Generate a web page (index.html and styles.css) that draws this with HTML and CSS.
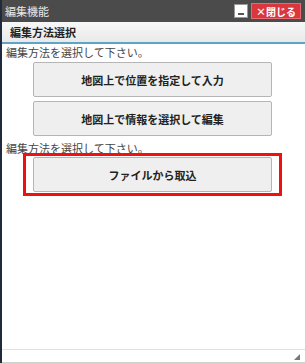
FILE: index.html
```
<!DOCTYPE html>
<html lang="ja">
<head>
    <meta charset="UTF-8">
    <meta name="viewport" content="width=device-width, initial-scale=1.0">
    <title>編集機能</title>
    <link rel="stylesheet" href="styles.css">
</head>
<body>
    <div class="window">
        <div class="titlebar">
            <span class="title">編集機能</span>
            <div class="title-buttons">
                <span class="btn-min"></span>
                <span class="btn-close">×閉じる</span>
            </div>
        </div>
        <div class="subheader">編集方法選択</div>
        <div class="content">
            <p class="note">編集方法を選択して下さい。</p>
            <div class="actions">
                <button class="action">地図上で位置を指定して入力</button>
                <button class="action">地図上で情報を選択して編集</button>
            </div>
            <p class="note">編集方法を選択して下さい。</p>
            <div class="actions">
                <div class="highlight">
                    <button class="action">ファイルから取込</button>
                </div>
            </div>
        </div>
        <div class="footer">
            <span class="grip"></span>
        </div>
    </div>
</body>
</html>
```

FILE: styles.css
```
body {
    margin: 0;
    font-family: "Noto Sans CJK JP", "Noto Sans", sans-serif;
    background: #fff;
}
.window {
    height: 363px;
    box-sizing: border-box;
    border-left: 2px solid #1f2a3a;
    display: flex;
    flex-direction: column;
}
.titlebar {
    height: 22px;
    background: #4b4b4b;
    display: flex;
    align-items: center;
    justify-content: space-between;
    padding: 0 4px 0 3px;
}
.title {
    color: #e8e8e8;
    font-size: 11px;
}
.title-buttons {
    display: flex;
    align-items: center;
    gap: 3px;
}
.btn-min {
    width: 14px;
    height: 14px;
    background: #fff;
    border: 1px solid #999;
    box-sizing: border-box;
    position: relative;
}
.btn-min::after {
    content: "";
    position: absolute;
    left: 3px;
    right: 3px;
    bottom: 2px;
    height: 2px;
    background: #555;
}
.btn-close {
    background: #d9363e;
    color: #fff;
    font-size: 10px;
    font-weight: bold;
    height: 16px;
    line-height: 15px;
    padding: 0 4px;
    border: 1px solid #e86a6f;
    box-sizing: border-box;
}
.subheader {
    height: 20px;
    line-height: 20px;
    background: linear-gradient(#f7f7f7, #e9e9e9);
    border-bottom: 2px solid #5ea4c9;
    font-size: 11px;
    font-weight: bold;
    color: #222;
    padding-left: 8px;
}
.content {
    flex: 1;
    padding-top: 1px;
}
.note {
    margin: 0;
    font-size: 11px;
    line-height: 14px;
    color: #444;
    padding-left: 4px;
}
.actions {
    display: flex;
    flex-direction: column;
    align-items: center;
    gap: 4px;
    margin: 3px 0 5px;
    padding-right: 2px;
}
.action {
    width: 239px;
    height: 35px;
    background: #efefef;
    border: 1px solid #b5b5b5;
    border-radius: 2px;
    font-family: inherit;
    font-size: 11px;
    font-weight: bold;
    color: #222;
    cursor: pointer;
}
.highlight {
    border: 3px solid #f01010;
    padding: 1px 7px;
    margin-top: -5px;
}
.highlight .action {
    display: block;
}
.footer {
    height: 12px;
    border-top: 1px solid #e2e2e2;
    border-bottom: 1px solid #cfcfcf;
    position: relative;
}
.grip {
    position: absolute;
    right: 5px;
    bottom: 2px;
    width: 0;
    height: 0;
    border-left: 6px solid transparent;
    border-bottom: 6px solid #777;
}
```
